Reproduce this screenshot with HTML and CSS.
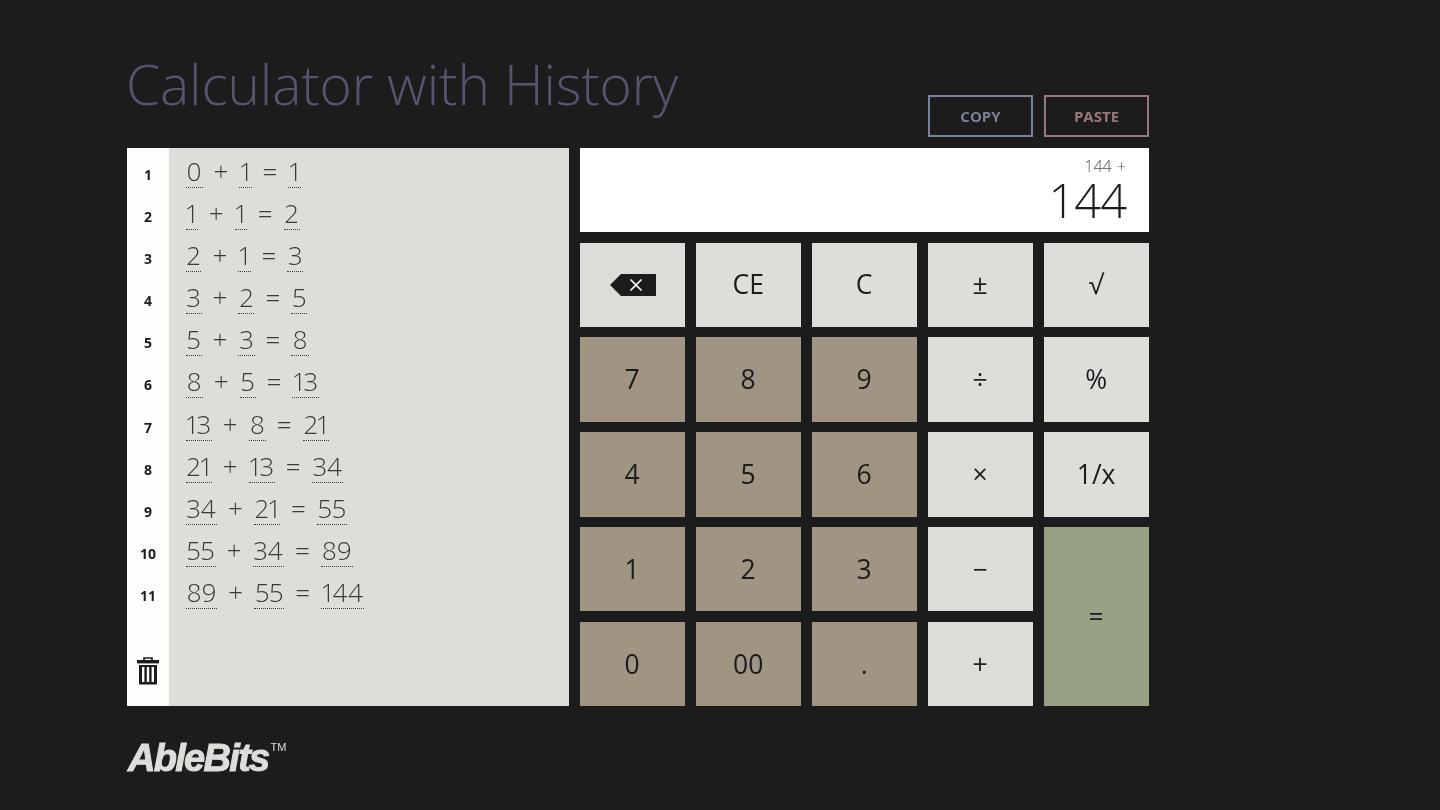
FILE: index.html
```html
<!DOCTYPE html>
<html>
<head>
    <title>Calculator with History</title>
    <link rel="stylesheet" href="styles.css">
</head>
<body>
    <div class="app">
        <div class="header">
            <h1 class="title">Calculator with History</h1>
            <div class="actions">
                <button class="action copy">COPY</button>
                <button class="action paste">PASTE</button>
            </div>
        </div>
        <div class="main">
            <div class="history">
                <div class="gutter">
                    <div class="num">1</div>
                    <div class="num">2</div>
                    <div class="num">3</div>
                    <div class="num">4</div>
                    <div class="num">5</div>
                    <div class="num">6</div>
                    <div class="num">7</div>
                    <div class="num">8</div>
                    <div class="num">9</div>
                    <div class="num">10</div>
                    <div class="num">11</div>
                    <svg class="trash" width="22" height="28" viewBox="0 0 22 28">
                        <path d="M7 3V1h8v2" fill="none" stroke="#1c1c1c" stroke-width="1.6"/>
                        <rect x="0" y="3" width="22" height="3.4" fill="#1c1c1c"/>
                        <path d="M2 8h18v19.500H2z" fill="#1c1c1c"/>
                        <path d="M5 10h2.400v15H5zM9.800 10h2.400v15H9.800zM14.600 10H17v15h-2.400z" fill="#fdfdfb"/>
                    </svg>
                </div>
                <div class="lines">
                    <div class="line"><span class="val">0</span><span>+</span><span class="val">1</span><span>=</span><span class="val">1</span></div>
                    <div class="line"><span class="val">1</span><span>+</span><span class="val">1</span><span>=</span><span class="val">2</span></div>
                    <div class="line"><span class="val">2</span><span>+</span><span class="val">1</span><span>=</span><span class="val">3</span></div>
                    <div class="line"><span class="val">3</span><span>+</span><span class="val">2</span><span>=</span><span class="val">5</span></div>
                    <div class="line"><span class="val">5</span><span>+</span><span class="val">3</span><span>=</span><span class="val">8</span></div>
                    <div class="line"><span class="val">8</span><span>+</span><span class="val">5</span><span>=</span><span class="val">13</span></div>
                    <div class="line"><span class="val">13</span><span>+</span><span class="val">8</span><span>=</span><span class="val">21</span></div>
                    <div class="line"><span class="val">21</span><span>+</span><span class="val">13</span><span>=</span><span class="val">34</span></div>
                    <div class="line"><span class="val">34</span><span>+</span><span class="val">21</span><span>=</span><span class="val">55</span></div>
                    <div class="line"><span class="val">55</span><span>+</span><span class="val">34</span><span>=</span><span class="val">89</span></div>
                    <div class="line"><span class="val">89</span><span>+</span><span class="val">55</span><span>=</span><span class="val">144</span></div>
                </div>
            </div>
            <div class="calc">
                <div class="display">
                    <div class="expr">144 +</div>
                    <div class="current">144</div>
                </div>
                <div class="keys">
                    <button class="key back">
                        <svg width="46" height="22" viewBox="0 0 46 22">
                            <path d="M11 0h35v22H11L0 11z" fill="#1c1c1c"/>
                            <path d="M20.500 5.500l11 11M31.500 5.500l-11 11" stroke="#fff" stroke-width="1.600" fill="none"/>
                        </svg>
                    </button>
                    <button class="key">CE</button>
                    <button class="key">C</button>
                    <button class="key">±</button>
                    <button class="key">√</button>
                    <button class="key digit">7</button>
                    <button class="key digit">8</button>
                    <button class="key digit">9</button>
                    <button class="key">÷</button>
                    <button class="key">%</button>
                    <button class="key digit">4</button>
                    <button class="key digit">5</button>
                    <button class="key digit">6</button>
                    <button class="key">×</button>
                    <button class="key">1/x</button>
                    <button class="key digit">1</button>
                    <button class="key digit">2</button>
                    <button class="key digit">3</button>
                    <button class="key">−</button>
                    <button class="key equals">=</button>
                    <button class="key digit">0</button>
                    <button class="key digit">00</button>
                    <button class="key digit">.</button>
                    <button class="key">+</button>
                </div>
            </div>
        </div>
        <div class="logo">AbleBits<sup class="tm">TM</sup></div>
    </div>
</body>
</html>
```

FILE: styles.css
```css
html, body {
    margin: 0;
    height: 100%;
}
body {
    background-color: #1c1c1c;
    font-family: "Open Sans", "Noto Sans", sans-serif;
    color: #1c1c1c;
    overflow: hidden;
}
button {
    font-family: inherit;
    padding: 0;
    border-radius: 0;
}
.app {
    width: 1022px;
    margin-left: 127px;
    will-change: transform;
}
.header {
    height: 148px;
    display: flex;
    justify-content: space-between;
    align-items: flex-start;
}
.title {
    margin: 48px 0 0 -1px;
    font-size: 55px;
    line-height: 72px;
    font-weight: 300;
    letter-spacing: -0.1px;
    color: #55556f;
}
.actions {
    display: flex;
    gap: 11px;
    margin-top: 95px;
}
.action {
    width: 105px;
    height: 42px;
    background: none;
    font-size: 15px;
    font-weight: 700;
}
.copy {
    border: 2px solid #7a8096;
    color: #7a8096;
}
.paste {
    border: 2px solid #96787a;
    color: #96787a;
}
.main {
    display: flex;
    gap: 11px;
    height: 558px;
}
.history {
    width: 442px;
    display: flex;
    background-color: #dedddA;
}
.gutter {
    width: 42px;
    background-color: #fdfdfb;
    display: flex;
    flex-direction: column;
    align-items: center;
    padding-top: 6px;
    box-sizing: border-box;
}
.num {
    height: 42.1px;
    line-height: 42px;
    font-size: 14px;
    font-weight: 700;
}
.trash {
    margin-top: auto;
    margin-bottom: 21px;
}
.lines {
    padding-left: 16.500px;
    padding-top: 5px;
    font-weight: 300;
    font-size: 26px;
    font-variant-numeric: proportional-nums;
    color: #3a3a3a;
}
.line {
    height: 42.1px;
    display: flex;
    gap: 11px;
    line-height: 36px;
}
.line span {
    height: 34px;
}
.val {
    border-bottom: 1px dotted #3a3a3a;
    padding: 0 1px;
}
.calc {
    width: 569px;
}
.display {
    height: 84px;
    background-color: #fff;
    text-align: right;
    padding: 9px 23px 0 0;
    box-sizing: border-box;
    margin-bottom: 10.5px;
}
.expr {
    font-size: 16px;
    line-height: 18px;
    font-weight: 300;
    color: #555;
    word-spacing: 1px;
}
.current {
    font-size: 47px;
    line-height: 51px;
    font-weight: 300;
    letter-spacing: -1px;
}
.keys {
    display: grid;
    grid-template-columns: repeat(5, 105.4px);
    grid-auto-rows: 84.3px;
    gap: 10.6px;
}
.key {
    border: 0;
    background-color: #dedddA;
    color: #1c1c1c;
    font-size: 26.500px;
    display: flex;
    align-items: center;
    justify-content: center;
    padding: 0 1px 1px 0;
}
.back {
    padding: 0;
}
.digit {
    background-color: #a09483;
}
.equals {
    grid-row: span 2;
    background-color: #98a185;
}
.logo {
    margin-top: 28px;
    font-family: "Liberation Sans", sans-serif;
    font-size: 38px;
    line-height: 48px;
    font-weight: 700;
    font-style: italic;
    letter-spacing: -1.700px;
    color: #dedddA;
    -webkit-text-stroke: 1px #dedddA;
    padding-left: 1px;
}
.tm {
    font-size: 11px;
    font-style: normal;
    font-weight: 400;
    letter-spacing: 0;
    -webkit-text-stroke: 0;
    vertical-align: 20px;
    line-height: 0;
    margin-left: 2px;
}
```
